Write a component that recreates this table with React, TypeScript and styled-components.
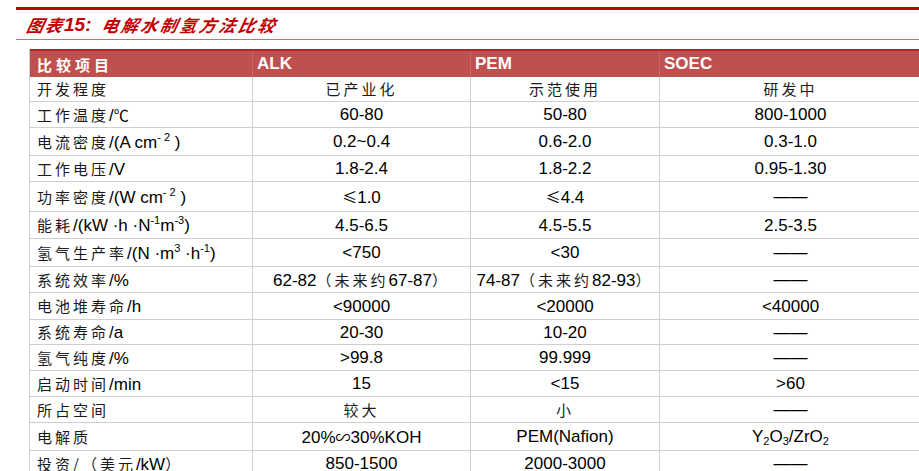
import * as React from "react";
import styled, { createGlobalStyle } from "styled-components";

const GlobalStyle = createGlobalStyle`
  body {
    margin: 0;
    background: #ffffff;
    overflow: hidden;
    font-family: "Liberation Sans", Arial, "Noto Sans CJK SC", sans-serif;
  }
`;

const COLS = "223px 218px 189px 262px";

const Page = styled.div`
  padding-top: 7px;
  width: 919px;
`;

const TopRule = styled.div`
  margin-left: 16px;
  height: 3px;
  background: #c00000;
`;

const Title = styled.h2`
  margin: 0;
  height: 29px;
  padding-left: 27px;
  display: flex;
  align-items: center;
  color: #c00000;
  font-style: italic;
  font-weight: bold;
  font-size: 19px;
  font-family: "Liberation Sans", Arial, sans-serif;
`;

const TitleCn = styled.span<{ $spacing: number }>`
  font-family: "Noto Sans CJK SC", sans-serif;
  font-size: 17px;
  font-style: italic;
  letter-spacing: ${(p) => p.$spacing}px;
  transform: skewX(-12deg);
  display: inline-block;
`;

const TitleRule = styled.div`
  margin-left: 16px;
  height: 1px;
  background: #d46a6a;
`;

const Table = styled.div`
  margin: 9px 0 0 29px;
  width: 892px;
  border-left: 1px solid #cfcfcf;
`;

const HeadRow = styled.div`
  display: grid;
  grid-template-columns: ${COLS};
  height: 28px;
  background: #c0504d;
  border-top: 2px solid #a82a2a;
  box-sizing: border-box;
  color: #ffffff;
`;

const HeadCell = styled.div<{ $pad: number }>`
  display: flex;
  align-items: center;
  padding-left: ${(p) => p.$pad}px;
  font-weight: bold;
  font-size: 17px;
  border-right: 1px solid #c86662;
`;

const HeadCn = styled.span`
  font-family: "Noto Sans CJK SC", sans-serif;
  font-size: 15px;
  letter-spacing: 4px;
  font-weight: bold;
`;

const Row = styled.div<{ $h: number }>`
  display: grid;
  grid-template-columns: ${COLS};
  height: ${(p) => p.$h}px;
  border-bottom: 1px solid #cfcfcf;
  box-sizing: border-box;
  color: #000000;
`;

const Cell = styled.div<{ $left?: boolean }>`
  display: flex;
  align-items: center;
  justify-content: ${(p) => (p.$left ? "flex-start" : "center")};
  padding-left: ${(p) => (p.$left ? "7px" : "0")};
  padding-top: 1px;
  font-size: 17px;
  white-space: nowrap;
  border-right: 1px solid #cfcfcf;
`;

const CellText = styled.span`
  display: inline-block;
  line-height: 20px;
`;

const Cn = styled.span`
  font-family: "Noto Sans CJK SC", sans-serif;
  font-size: 15px;
  letter-spacing: 3px;
  color: #1a1a1a;
`;

const Sym = styled.span`
  font-family: "Noto Sans CJK SC", sans-serif;
  font-size: 15px;
`;

const Sup = styled.sup`
  font-size: 11px;
  vertical-align: 7px;
  line-height: 0;
`;

const Sub = styled.sub`
  font-size: 11px;
  vertical-align: -3px;
  line-height: 0;
`;

const Dash = () => <span>——</span>;

type RowData = {
  h: number;
  label: React.ReactNode;
  alk: React.ReactNode;
  pem: React.ReactNode;
  soec: React.ReactNode;
};

const rows: RowData[] = [
  {
    h: 25,
    label: <Cn>开发程度</Cn>,
    alk: <Cn>已产业化</Cn>,
    pem: <Cn>示范使用</Cn>,
    soec: <Cn>研发中</Cn>,
  },
  {
    h: 26,
    label: (
      <>
        <Cn>工作温度</Cn>/<Sym>℃</Sym>
      </>
    ),
    alk: "60-80",
    pem: "50-80",
    soec: "800-1000",
  },
  {
    h: 28,
    label: (
      <>
        <Cn>电流密度</Cn>/(A cm<Sup>- 2</Sup> )
      </>
    ),
    alk: "0.2~0.4",
    pem: "0.6-2.0",
    soec: "0.3-1.0",
  },
  {
    h: 26,
    label: (
      <>
        <Cn>工作电压</Cn>/V
      </>
    ),
    alk: "1.8-2.4",
    pem: "1.8-2.2",
    soec: "0.95-1.30",
  },
  {
    h: 30,
    label: (
      <>
        <Cn>功率密度</Cn>/(W cm<Sup>- 2</Sup> )
      </>
    ),
    alk: (
      <>
        <Sym>≤</Sym>1.0
      </>
    ),
    pem: (
      <>
        <Sym>≤</Sym>4.4
      </>
    ),
    soec: <Dash />,
  },
  {
    h: 27,
    label: (
      <>
        <Cn>能耗</Cn>/(kW ·h ·N<Sup>-1</Sup>m<Sup>-3</Sup>)
      </>
    ),
    alk: "4.5-6.5",
    pem: "4.5-5.5",
    soec: "2.5-3.5",
  },
  {
    h: 28,
    label: (
      <>
        <Cn>氢气生产率</Cn>/(N ·m<Sup>3</Sup> ·h<Sup>-1</Sup>)
      </>
    ),
    alk: "<750",
    pem: "<30",
    soec: <Dash />,
  },
  {
    h: 26,
    label: (
      <>
        <Cn>系统效率</Cn>/%
      </>
    ),
    alk: (
      <>
        62-82<Cn>（未来约</Cn>67-87<Cn>）</Cn>
      </>
    ),
    pem: (
      <>
        74-87<Cn>（未来约</Cn>82-93<Cn>）</Cn>
      </>
    ),
    soec: <Dash />,
  },
  {
    h: 27,
    label: (
      <>
        <Cn>电池堆寿命</Cn>/h
      </>
    ),
    alk: "<90000",
    pem: "<20000",
    soec: "<40000",
  },
  {
    h: 25,
    label: (
      <>
        <Cn>系统寿命</Cn>/a
      </>
    ),
    alk: "20-30",
    pem: "10-20",
    soec: <Dash />,
  },
  {
    h: 26,
    label: (
      <>
        <Cn>氢气纯度</Cn>/%
      </>
    ),
    alk: ">99.8",
    pem: "99.999",
    soec: <Dash />,
  },
  {
    h: 26,
    label: (
      <>
        <Cn>启动时间</Cn>/min
      </>
    ),
    alk: "15",
    pem: "<15",
    soec: ">60",
  },
  {
    h: 26,
    label: <Cn>所占空间</Cn>,
    alk: <Cn>较大</Cn>,
    pem: <Cn>小</Cn>,
    soec: <Dash />,
  },
  {
    h: 28,
    label: <Cn>电解质</Cn>,
    alk: (
      <>
        20%<Sym>∽</Sym>30%KOH
      </>
    ),
    pem: "PEM(Nafion)",
    soec: (
      <>
        Y<Sub>2</Sub>O<Sub>3</Sub>/ZrO<Sub>2</Sub>
      </>
    ),
  },
  {
    h: 26,
    label: (
      <>
        <Cn>投资/（美元</Cn>/kW<Cn>）</Cn>
      </>
    ),
    alk: "850-1500",
    pem: "2000-3000",
    soec: <Dash />,
  },
];

export default function App() {
  return (
    <Page>
      <GlobalStyle />
      <TopRule />
      <Title>
        <TitleCn $spacing={1.5}>图表</TitleCn>15:&nbsp;&nbsp;
        <TitleCn $spacing={2.5}>电解水制氢方法比较</TitleCn>
      </Title>
      <TitleRule />
      <Table>
        <HeadRow>
          <HeadCell $pad={7}>
            <HeadCn>比较项目</HeadCn>
          </HeadCell>
          <HeadCell $pad={4}>ALK</HeadCell>
          <HeadCell $pad={4}>PEM</HeadCell>
          <HeadCell $pad={4}>SOEC</HeadCell>
        </HeadRow>
        {rows.map((r, i) => (
          <Row key={i} $h={r.h}>
            <Cell $left>
              <CellText>{r.label}</CellText>
            </Cell>
            <Cell>
              <CellText>{r.alk}</CellText>
            </Cell>
            <Cell>
              <CellText>{r.pem}</CellText>
            </Cell>
            <Cell>
              <CellText>{r.soec}</CellText>
            </Cell>
          </Row>
        ))}
      </Table>
    </Page>
  );
}
